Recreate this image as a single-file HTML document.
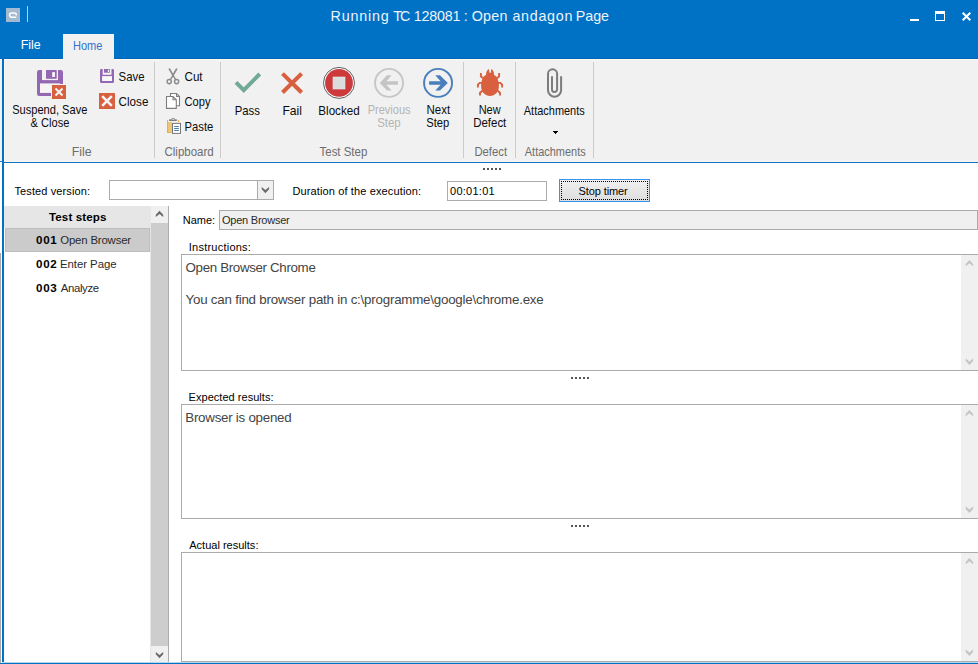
<!DOCTYPE html>
<html><head><meta charset="utf-8"><title>Running TC 128081 : Open andagon Page</title>
<style>
html,body{margin:0;padding:0;}
body{width:978px;height:664px;overflow:hidden;position:relative;background:#fff;font-family:"Liberation Sans",sans-serif;}
.a{position:absolute;}
.t{position:absolute;white-space:pre;line-height:1;transform-origin:0 0;font-family:"Liberation Sans",sans-serif;}
.sep{position:absolute;top:62px;height:96px;width:1px;background:#cbcbcb;}
.dot{position:absolute;width:2px;height:2px;background:#555;}
svg{position:absolute;overflow:visible;}
</style></head><body>
<!-- window chrome -->
<div class="a" style="left:0;top:0;width:978px;height:59px;background:#0072c6"></div>
<div class="a" style="left:4px;top:59px;width:974px;height:102px;background:#f1f1f1"></div>
<div class="a" style="left:0;top:58px;width:978px;height:1px;background:#0068ba"></div>
<div class="a" style="left:4px;top:59px;width:974px;height:1px;background:#fcf8f2"></div>
<div class="a" style="left:63px;top:34px;width:51px;height:26px;background:#f1f1f1"></div>
<div class="a" style="left:2px;top:59px;width:2px;height:605px;background:#0072c6"></div>
<div class="a" style="left:0;top:59px;width:2px;height:102px;background:#f1f1f1"></div>
<div class="a" style="left:0;top:161px;width:2px;height:1px;background:#2a80cc"></div>
<div class="a" style="left:4px;top:161px;width:974px;height:1px;background:#fbf6ef"></div>
<div class="a" style="left:4px;top:59px;width:1px;height:102px;background:#fbf6ef"></div>
<div class="a" style="left:2px;top:162px;width:976px;height:1px;background:#0b74c6"></div>
<div class="a" style="left:2px;top:662px;width:976px;height:1px;background:#b3d5ee"></div><div class="a" style="left:0;top:663px;width:978px;height:1px;background:#0072c6"></div>
<div class="a" style="left:0;top:253px;width:1px;height:410px;background:#ababab"></div>
<!-- title icon -->
<div class="a" style="left:6px;top:8px;width:14px;height:14px;background:#a4bad1"></div>
<svg style="left:6px;top:8px" width="14" height="14" viewBox="0 0 14 14"><path d="M10.3 9.2 H5.7 a2.15 2.15 0 0 1 0 -4.3 H8.3 a2 2 0 0 1 2 2 v0.5" fill="none" stroke="#fff" stroke-width="1.5"/></svg>
<div class="a" style="left:27px;top:6px;width:1px;height:16px;background:#c6cbd3"></div>
<!-- window buttons -->
<div class="a" style="left:910px;top:19px;width:9px;height:2px;background:#fff"></div>
<div class="a" style="left:935px;top:11px;width:8px;height:6px;border:1px solid #fff;border-top:3px solid #fff"></div>
<svg style="left:962px;top:12px" width="9" height="9" viewBox="0 0 9 9"><path d="M0.7 0.7 L8.3 8.3 M8.3 0.7 L0.7 8.3" stroke="#fff" stroke-width="2" fill="none"/></svg>
<!-- ribbon separators -->
<div class="sep" style="left:154px"></div>
<div class="sep" style="left:220px"></div>
<div class="sep" style="left:463px"></div>
<div class="sep" style="left:515px"></div>
<div class="sep" style="left:593px"></div>
<!-- Suspend, Save & Close icon -->
<svg style="left:32px;top:64px" width="40" height="40" viewBox="0 0 40 40">
<rect x="5" y="6" width="26" height="26" rx="2.2" fill="#9467b2"/>
<rect x="10" y="5" width="16" height="11.1" fill="#f1f1f1"/>
<rect x="14" y="6" width="10.7" height="8.8" fill="#9467b2"/>
<rect x="20.2" y="8.1" width="2.7" height="4.9" fill="#fbfbfb"/>
<rect x="8" y="19.4" width="20" height="9.5" fill="#f6f5f3"/>
<rect x="19" y="20" width="16" height="16" fill="#f4f2f0"/>
<rect x="20" y="21" width="14" height="14" fill="#d9603f"/>
<path d="M23.5 24.5 L30.5 31.5 M30.5 24.5 L23.5 31.5" stroke="#f3f3f3" stroke-width="2.1" fill="none"/>
</svg>
<!-- Save icon -->
<svg style="left:96px;top:64px" width="24" height="24" viewBox="0 0 24 24">
<rect x="4" y="5" width="14" height="14" rx="1.2" fill="#9467b2"/>
<rect x="6.7" y="4" width="8.8" height="6.8" fill="#f1f1f1"/>
<rect x="8" y="5" width="5.8" height="3.7" fill="#9467b2"/>
<rect x="11.9" y="5.8" width="1.1" height="2.2" fill="#fbfbfb"/>
<rect x="6.1" y="12.1" width="9.9" height="4.9" fill="#f8f7f6"/>
</svg>
<!-- Close icon -->
<svg style="left:96px;top:88px" width="24" height="24" viewBox="0 0 24 24">
<rect x="3" y="5" width="16" height="16" fill="#d9603f"/>
<path d="M6.2 8.2 L15.8 17.8 M15.8 8.2 L6.2 17.8" stroke="#f3f3f3" stroke-width="2.6" fill="none"/>
</svg>
<!-- Cut icon -->
<svg style="left:160px;top:64px" width="28" height="24" viewBox="0 0 28 24">
<g fill="none" stroke="#8a8a8a" stroke-width="1.4">
<path d="M9 4.7 L15.6 15.6"/><path d="M17 4.7 L10.4 15.6"/>
<circle cx="9.2" cy="17.6" r="2.1"/><circle cx="16.6" cy="17.6" r="2.1"/>
</g>
<path d="M9 4.7 L13 12.3 L17 4.7 L15.8 4.7 L13 10 L10.2 4.7 Z" fill="#8a8a8a"/>
</svg>
<!-- Copy icon -->
<svg style="left:160px;top:88px" width="28" height="24" viewBox="0 0 28 24">
<g fill="#fff" stroke="#7e7e7e" stroke-width="1.1">
<path d="M10.5 5.5 H16.5 L19.5 8.5 V17.7 H10.5 Z"/>
<path d="M16.5 5.5 V8.5 H19.5" fill="none"/>
<path d="M6.5 8.5 H13 L16.3 11.8 V20.4 H6.5 Z"/>
<path d="M13 8.5 V11.8 H16.3" fill="none"/>
</g>
</svg>
<!-- Paste icon -->
<svg style="left:163px;top:114px" width="22" height="22" viewBox="0 0 22 22">
<rect x="4" y="8" width="5" height="11" fill="#f0c777"/>
<rect x="4" y="6.1" width="1.1" height="12.9" fill="#e9ae45"/>
<rect x="4" y="18" width="4" height="1" fill="#e9ae45"/>
<rect x="14.9" y="6.1" width="1.1" height="2" fill="#e9ae45"/>
<rect x="6.1" y="5.4" width="7.7" height="1.5" fill="#707070"/><path d="M8.2 5.6 L8.9 4.3 H11.2 L11.9 5.6 Z" fill="#707070"/><rect x="9.1" y="5.1" width="1.9" height="0.8" fill="#e8e8e8"/>
<rect x="9.5" y="9.4" width="8" height="10" fill="#fff" stroke="#777" stroke-width="1"/>
<rect x="11.1" y="12" width="4.8" height="0.9" fill="#3b73b4"/>
<rect x="11.1" y="14" width="4.8" height="0.9" fill="#3b73b4"/>
<rect x="11.1" y="16" width="4.8" height="0.9" fill="#3b73b4"/>
</svg>
<!-- Pass -->
<svg style="left:228px;top:64px" width="40" height="38" viewBox="0 0 40 38">
<path d="M8 18.4 L15.8 26.1 L31.7 10" stroke="#72a897" stroke-width="4" fill="none" stroke-linejoin="miter"/>
</svg>
<!-- Fail -->
<svg style="left:272px;top:64px" width="40" height="38" viewBox="0 0 40 38">
<path d="M10.5 9.6 L29.6 28.5 M29.6 9.6 L10.5 28.5" stroke="#d9603f" stroke-width="4.1" fill="none"/>
</svg>
<!-- Blocked -->
<svg style="left:318px;top:62px" width="42" height="42" viewBox="0 0 42 42">
<circle cx="21" cy="20.9" r="15.5" fill="#fff" stroke="#4f4f4f" stroke-width="0.9"/>
<circle cx="21" cy="20.9" r="13.9" fill="#cc3a3c"/>
<rect x="15" y="15" width="12" height="12" fill="#dcdcdc" stroke="#e6efef" stroke-width="0.6"/>
</svg>
<!-- Previous -->
<svg style="left:368px;top:62px" width="42" height="42" viewBox="0 0 42 42">
<circle cx="21.05" cy="20.9" r="14" fill="none" stroke="#c6c6c6" stroke-width="1.9"/>
<path d="M29.9 19.2 H18.4 L23.7 13.2 H19 L11.8 20.9 L19 28.6 H23.7 L18.4 22.8 H29.9 Z" fill="#c4c4c4"/>
</svg>
<!-- Next -->
<svg style="left:417px;top:62px" width="42" height="42" viewBox="0 0 42 42">
<circle cx="21.05" cy="20.9" r="14" fill="none" stroke="#487ebb" stroke-width="1.9"/>
<path d="M12.1 19.2 H23.6 L18.3 13.2 H23 L30.8 20.9 L23 28.6 H18.3 L23.6 22.8 H12.1 Z" fill="#487ebb"/>
</svg>
<!-- Bug -->
<svg style="left:470px;top:62px" width="42" height="42" viewBox="0 0 42 42">
<g fill="#d9603f">
<path d="M20 11.6 C 13 12.4 11.1 18.5 11.1 24 C 11.1 30 15 33.9 20 33.9 C 25 33.9 28.9 30 28.9 24 C 28.9 18.5 27 12.4 20 11.6 Z"/>
<path d="M16.1 13.5 C 15.8 10.5 17 8 18.9 7 L 19.4 10.8 L 20.8 10.8 L 21.2 7 C 23.2 8 24.3 10.5 24 13.5 Z"/>
</g>
<g fill="none" stroke="#d9603f" stroke-width="1.9">
<path d="M13.6 16.6 L10.9 14.5 V11.1"/><path d="M26.4 16.6 L29.1 14.5 V11.1"/>
<path d="M12.5 20.9 H9.7 L7.9 22.7 V25.6"/><path d="M27.5 20.9 H30.3 L32.1 22.7 V25.6"/>
<path d="M13 28.3 L10 30.7 V33.5"/><path d="M27 28.3 L30 30.7 V33.5"/>
</g>
</svg>
<!-- Paperclip -->
<svg style="left:534px;top:62px" width="42" height="42" viewBox="0 0 42 42">
<path d="M18 14.2 V27.45 A2.55 2.55 0 0 0 23.1 27.45 V11.85 A4.55 4.55 0 0 0 14 11.85 V28.15 A6.55 6.55 0 0 0 27.1 28.15 V14.2" fill="none" stroke="#7c7c7c" stroke-width="2"/>
</svg>
<!-- dropdown arrow -->
<div class="a" style="left:553px;top:131px;width:5px;height:1px;background:#000"></div>
<div class="a" style="left:554px;top:132px;width:3px;height:1px;background:#000"></div>
<div class="a" style="left:555px;top:133px;width:1px;height:1px;background:#000"></div>

<!-- ribbon splitter dots -->
<div class="dot" style="left:483px;top:168px"></div><div class="dot" style="left:487px;top:168px"></div><div class="dot" style="left:491px;top:168px"></div><div class="dot" style="left:495px;top:168px"></div><div class="dot" style="left:499px;top:168px"></div>
<!-- form row -->
<div class="a" style="left:109px;top:180px;width:163px;height:18px;border:1px solid #ababab;background:#fff"></div>
<div class="a" style="left:257px;top:181px;width:15px;height:18px;background:#f0f0f0;border-left:1px solid #ababab"></div>
<div class="a" style="left:447px;top:181px;width:98px;height:18px;border:1px solid #ababab;background:#fff"></div>
<div class="a" style="left:559px;top:179px;width:89px;height:21px;border:1px solid #3393ee;background:linear-gradient(#f1f1f1,#e6e6e6 50%,#dedede)"></div>
<div class="a" style="left:561px;top:181px;width:85px;height:17px;border:1px dotted #000"></div>
<!-- left list -->
<div class="a" style="left:4px;top:206px;width:147px;height:22px;background:#e6e6e6"></div>
<div class="a" style="left:5px;top:228px;width:143px;height:22px;background:#cbcbcb;border:1px solid #bebebe;box-sizing:content-box"></div>
<div class="a" style="left:151px;top:206px;width:17px;height:456px;background:#cdcdcd"></div>
<div class="a" style="left:150px;top:228px;width:1px;height:434px;background:#e6e6e6"></div>
<div class="a" style="left:151px;top:206px;width:17px;height:17px;background:#f0f0f0"></div>
<div class="a" style="left:151px;top:646px;width:17px;height:16px;background:#f0f0f0"></div>
<div class="a" style="left:168px;top:206px;width:1px;height:456px;background:#adadad"></div>
<!-- name field -->
<div class="a" style="left:219px;top:210px;width:757px;height:18px;border:1px solid #ababab;background:#f0f0f0"></div>
<!-- textareas -->
<div class="a" style="left:181px;top:254px;width:800px;height:115px;border:1px solid #ababab;background:#fff"></div>
<div class="a" style="left:961px;top:255px;width:17px;height:115px;background:#f0f0f0"></div>
<div class="a" style="left:181px;top:404px;width:800px;height:113px;border:1px solid #ababab;background:#fff"></div>
<div class="a" style="left:961px;top:405px;width:17px;height:113px;background:#f0f0f0"></div>
<div class="a" style="left:181px;top:552px;width:800px;height:108px;border:1px solid #ababab;background:#fff"></div>
<div class="a" style="left:961px;top:553px;width:17px;height:108px;background:#f0f0f0"></div>
<!-- textarea chevrons -->
<!-- chevrons -->
<svg style="left:0;top:0" width="1" height="1"><polygon points="265.40,193.30 269.10,189.30 269.10,187.00 265.40,190.00 261.70,187.00 261.70,189.30" fill="#6b6b6b"/></svg>
<svg style="left:0;top:0" width="1" height="1"><polygon points="159.50,210.80 163.20,214.80 163.20,217.10 159.50,214.10 155.80,217.10 155.80,214.80" fill="#6a6a6a"/></svg>
<svg style="left:0;top:0" width="1" height="1"><polygon points="159.50,658.30 163.20,654.30 163.20,652.00 159.50,655.00 155.80,652.00 155.80,654.30" fill="#6a6a6a"/></svg>
<svg style="left:0;top:0" width="1" height="1"><polygon points="969.40,259.90 973.10,263.90 973.10,266.20 969.40,263.20 965.70,266.20 965.70,263.90" fill="#c4c4c4"/></svg>
<svg style="left:0;top:0" width="1" height="1"><polygon points="969.40,364.90 973.10,360.90 973.10,358.60 969.40,361.60 965.70,358.60 965.70,360.90" fill="#c4c4c4"/></svg>
<svg style="left:0;top:0" width="1" height="1"><polygon points="969.40,409.90 973.10,413.90 973.10,416.20 969.40,413.20 965.70,416.20 965.70,413.90" fill="#c4c4c4"/></svg>
<svg style="left:0;top:0" width="1" height="1"><polygon points="969.40,512.90 973.10,508.90 973.10,506.60 969.40,509.60 965.70,506.60 965.70,508.90" fill="#c4c4c4"/></svg>
<svg style="left:0;top:0" width="1" height="1"><polygon points="969.40,557.90 973.10,561.90 973.10,564.20 969.40,561.20 965.70,564.20 965.70,561.90" fill="#c4c4c4"/></svg>
<svg style="left:0;top:0" width="1" height="1"><polygon points="969.40,655.90 973.10,651.90 973.10,649.60 969.40,652.60 965.70,649.60 965.70,651.90" fill="#c4c4c4"/></svg>
<!-- splitter dots -->
<div class="dot" style="left:571px;top:377px"></div><div class="dot" style="left:575px;top:377px"></div><div class="dot" style="left:579px;top:377px"></div><div class="dot" style="left:583px;top:377px"></div><div class="dot" style="left:587px;top:377px"></div>
<div class="dot" style="left:571px;top:525px"></div><div class="dot" style="left:575px;top:525px"></div><div class="dot" style="left:579px;top:525px"></div><div class="dot" style="left:583px;top:525px"></div><div class="dot" style="left:587px;top:525px"></div>
<span class="t" style="left:330.61px;top:9px;font-size:14.3px;font-weight:400;color:#eef3fa;letter-spacing:0.802px">Running</span>
<span class="t" style="left:393.25px;top:9px;font-size:14.3px;font-weight:400;color:#eef3fa;letter-spacing:-2.061px">TC</span>
<span class="t" style="left:413.82px;top:9px;font-size:14.3px;font-weight:400;color:#eef3fa;letter-spacing:-0.234px">128081</span>
<span class="t" style="left:463.80px;top:9px;font-size:14.3px;font-weight:400;color:#eef3fa;letter-spacing:0.000px">:</span>
<span class="t" style="left:471.67px;top:9px;font-size:14.3px;font-weight:400;color:#eef3fa;letter-spacing:0.299px">Open</span>
<span class="t" style="left:512.45px;top:9px;font-size:14.3px;font-weight:400;color:#eef3fa;letter-spacing:0.706px">andagon</span>
<span class="t" style="left:575.80px;top:9px;font-size:14.3px;font-weight:400;color:#eef3fa;letter-spacing:-0.047px">Page</span>
<span class="t" style="left:20.00px;top:39px;font-size:12.2px;font-weight:400;color:#ffffff;transform:translateX(0.65px) scaleX(1.0167);letter-spacing:0.000px">File</span>
<span class="t" style="left:72.00px;top:40px;font-size:12.2px;font-weight:400;color:#2f74cf;transform:translateX(0.91px) scaleX(0.9057);letter-spacing:0.000px">Home</span>
<span class="t" style="left:12.00px;top:104px;font-size:12.2px;font-weight:400;color:#0c0c0c;transform:translateX(0.15px) scaleX(0.9096);letter-spacing:0.000px">Suspend, Save</span>
<span class="t" style="left:30.00px;top:117px;font-size:12.2px;font-weight:400;color:#0c0c0c;transform:translateX(0.61px) scaleX(0.9077);letter-spacing:0.000px">&amp; Close</span>
<span class="t" style="left:118.00px;top:71px;font-size:12.2px;font-weight:400;color:#0c0c0c;transform:translateX(0.61px) scaleX(0.9355);letter-spacing:0.000px">Save</span>
<span class="t" style="left:118.00px;top:96px;font-size:12.2px;font-weight:400;color:#0c0c0c;transform:translateX(0.61px) scaleX(0.9559);letter-spacing:0.000px">Close</span>
<span class="t" style="left:71.00px;top:146px;font-size:12.2px;font-weight:400;color:#6d6d6d;transform:translateX(0.74px) scaleX(1.0127);letter-spacing:0.000px">File</span>
<span class="t" style="left:184.00px;top:71px;font-size:12.2px;font-weight:400;color:#0c0c0c;transform:translateX(0.49px) scaleX(0.9536);letter-spacing:0.000px">Cut</span>
<span class="t" style="left:184.00px;top:96px;font-size:12.2px;font-weight:400;color:#0c0c0c;transform:translateX(0.54px) scaleX(0.9120);letter-spacing:0.000px">Copy</span>
<span class="t" style="left:184.00px;top:121px;font-size:12.2px;font-weight:400;color:#0c0c0c;transform:translateX(0.60px) scaleX(0.9226);letter-spacing:0.000px">Paste</span>
<span class="t" style="left:164.00px;top:146px;font-size:12.2px;font-weight:400;color:#6d6d6d;transform:translateX(0.49px) scaleX(0.9431);letter-spacing:0.000px">Clipboard</span>
<span class="t" style="left:234.00px;top:105px;font-size:12.2px;font-weight:400;color:#0c0c0c;transform:translateX(0.71px) scaleX(0.9297);letter-spacing:0.000px">Pass</span>
<span class="t" style="left:282.00px;top:105px;font-size:12.2px;font-weight:400;color:#0c0c0c;transform:translateX(0.41px) scaleX(0.9973);letter-spacing:0.000px">Fail</span>
<span class="t" style="left:318.00px;top:105px;font-size:12.2px;font-weight:400;color:#0c0c0c;transform:translateX(0.32px) scaleX(0.9540);letter-spacing:0.000px">Blocked</span>
<span class="t" style="left:367.00px;top:104px;font-size:12.2px;font-weight:400;color:#b4b4b4;transform:translateX(0.65px) scaleX(0.9068);letter-spacing:0.000px">Previous</span>
<span class="t" style="left:377.00px;top:117px;font-size:12.2px;font-weight:400;color:#b4b4b4;transform:translateX(0.15px) scaleX(0.9373);letter-spacing:0.000px">Step</span>
<span class="t" style="left:426.00px;top:104px;font-size:12.2px;font-weight:400;color:#0c0c0c;transform:translateX(0.57px) scaleX(0.9430);letter-spacing:0.000px">Next</span>
<span class="t" style="left:426.00px;top:117px;font-size:12.2px;font-weight:400;color:#0c0c0c;transform:translateX(0.17px) scaleX(0.9185);letter-spacing:0.000px">Step</span>
<span class="t" style="left:319.00px;top:146px;font-size:12.2px;font-weight:400;color:#6d6d6d;transform:translateX(0.54px) scaleX(0.9400);letter-spacing:0.000px">Test Step</span>
<span class="t" style="left:478.00px;top:104px;font-size:12.2px;font-weight:400;color:#0c0c0c;transform:translateX(0.65px) scaleX(0.9030);letter-spacing:0.000px">New</span>
<span class="t" style="left:473.00px;top:117px;font-size:12.2px;font-weight:400;color:#0c0c0c;transform:translateX(0.25px) scaleX(0.9382);letter-spacing:0.000px">Defect</span>
<span class="t" style="left:474.00px;top:146px;font-size:12.2px;font-weight:400;color:#6d6d6d;transform:translateX(0.40px) scaleX(0.9258);letter-spacing:0.000px">Defect</span>
<span class="t" style="left:523.00px;top:105px;font-size:12.2px;font-weight:400;color:#0c0c0c;transform:translateX(0.81px) scaleX(0.8994);letter-spacing:0.000px">Attachments</span>
<span class="t" style="left:524.00px;top:146px;font-size:12.2px;font-weight:400;color:#6d6d6d;transform:translateX(0.81px) scaleX(0.8986);letter-spacing:0.000px">Attachments</span>
<span class="t" style="left:14.48px;top:186px;font-size:11px;font-weight:400;color:#000;letter-spacing:0.116px">Tested version:</span>
<span class="t" style="left:292.48px;top:186px;font-size:11px;font-weight:400;color:#000;letter-spacing:0.127px">Duration of the execution:</span>
<span class="t" style="left:450.09px;top:186px;font-size:11px;font-weight:400;color:#000;letter-spacing:0.250px">00:01:01</span>
<span class="t" style="left:578.56px;top:186px;font-size:11px;font-weight:400;color:#000;letter-spacing:-0.104px">Stop timer</span>
<span class="t" style="left:182.87px;top:215px;font-size:11px;font-weight:400;color:#000;letter-spacing:-0.052px">Name:</span>
<span class="t" style="left:222.03px;top:215px;font-size:11px;font-weight:400;color:#2a2a2a;letter-spacing:-0.238px">Open Browser</span>
<span class="t" style="left:188.79px;top:242px;font-size:11px;font-weight:400;color:#000;letter-spacing:0.232px">Instructions:</span>
<span class="t" style="left:188.58px;top:392px;font-size:11px;font-weight:400;color:#000;letter-spacing:0.034px">Expected results:</span>
<span class="t" style="left:189.28px;top:540px;font-size:11px;font-weight:400;color:#000;letter-spacing:0.006px">Actual results:</span>
<span class="t" style="left:49.01px;top:211px;font-size:11.6px;font-weight:700;color:#000;letter-spacing:0.101px">Test steps</span>
<span class="t" style="left:36.11px;top:234px;font-size:11.6px;font-weight:700;color:#000;letter-spacing:0.649px">001</span>
<span class="t" style="left:60.26px;top:235px;font-size:11.4px;font-weight:400;color:#2a2a2a;letter-spacing:-0.173px">Open Browser</span>
<span class="t" style="left:36.11px;top:258px;font-size:11.6px;font-weight:700;color:#000;letter-spacing:0.674px">002</span>
<span class="t" style="left:59.93px;top:259px;font-size:11.4px;font-weight:400;color:#2a2a2a;letter-spacing:-0.040px">Enter Page</span>
<span class="t" style="left:36.11px;top:282px;font-size:11.6px;font-weight:700;color:#000;letter-spacing:0.661px">003</span>
<span class="t" style="left:60.82px;top:283px;font-size:11.4px;font-weight:400;color:#2a2a2a;letter-spacing:-0.376px">Analyze</span>
<span class="t" style="left:185.52px;top:261px;font-size:13.33px;font-weight:400;color:#444;letter-spacing:-0.334px">Open Browser Chrome</span>
<span class="t" style="left:185.54px;top:293px;font-size:13.33px;font-weight:400;color:#444;letter-spacing:-0.216px">You can find browser path in c:\programme\google\chrome.exe</span>
<span class="t" style="left:185.30px;top:411px;font-size:13.33px;font-weight:400;color:#444;letter-spacing:-0.251px">Browser is opened</span>
</body></html>
